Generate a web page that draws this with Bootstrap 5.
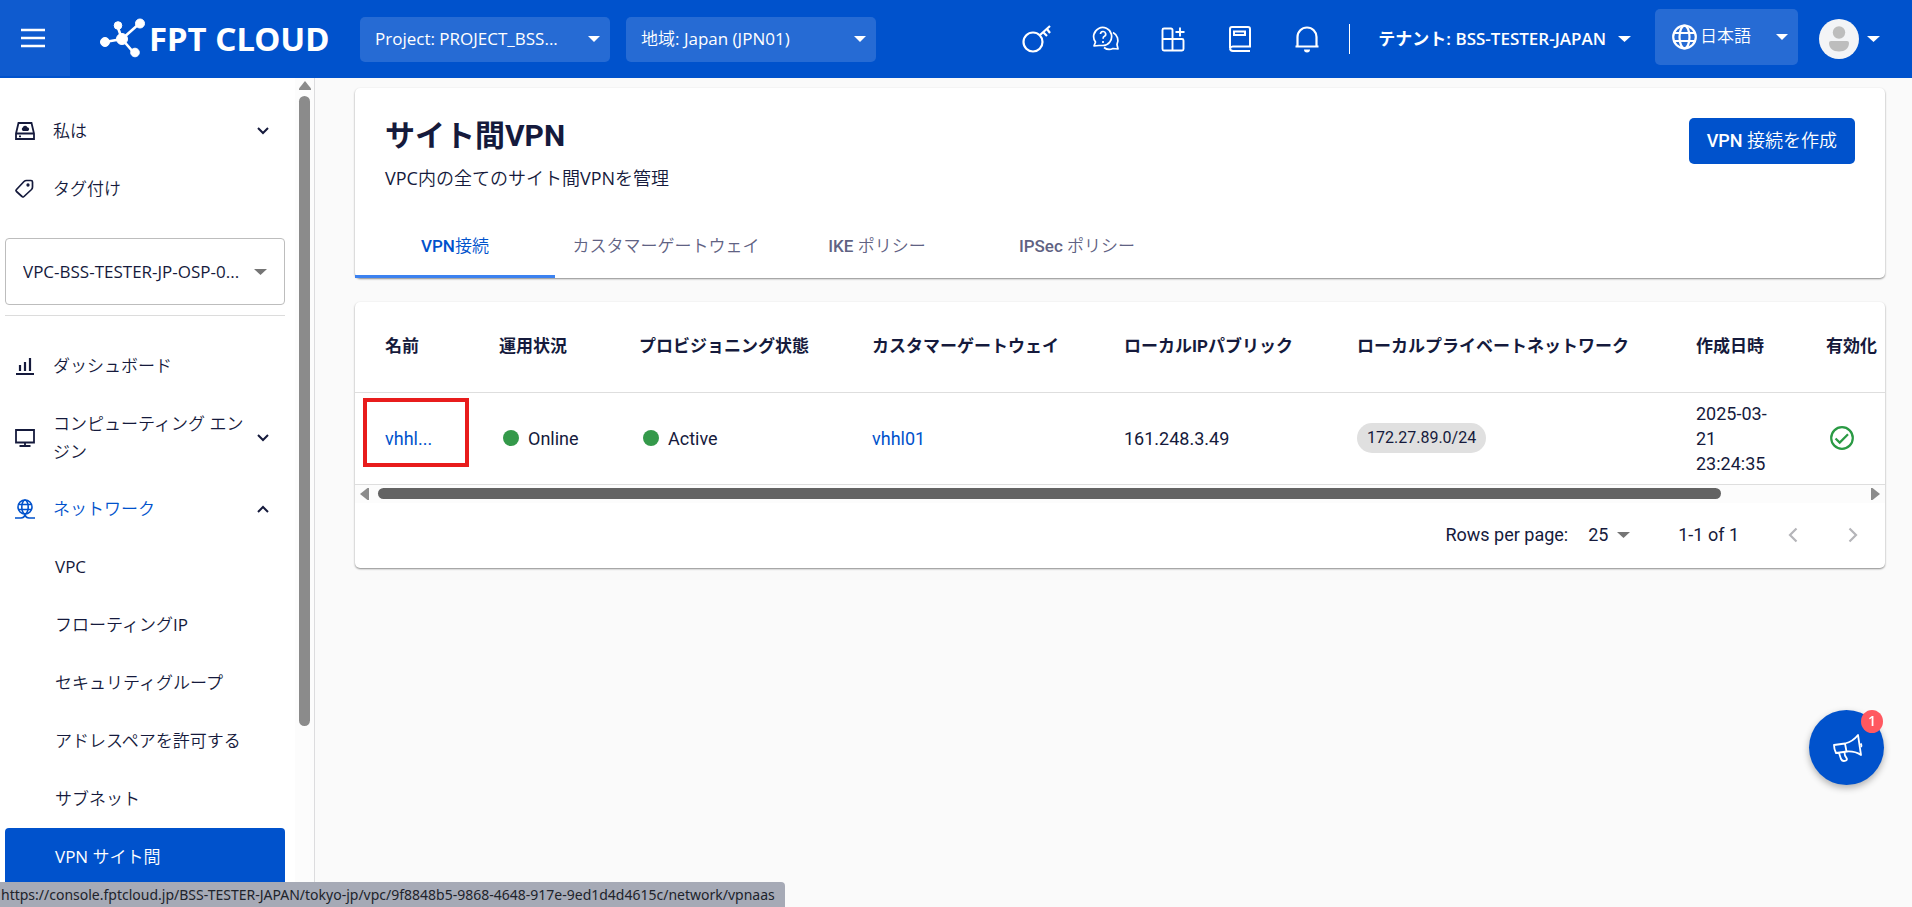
<!DOCTYPE html>
<html lang="ja">
<head>
<meta charset="utf-8">
<meta name="viewport" content="width=device-width, initial-scale=1">
<title>サイト間VPN - FPT Cloud</title>
<link href="https://cdn.jsdelivr.net/npm/bootstrap@5.3.0/dist/css/bootstrap.min.css" rel="stylesheet">
<style>
:root{--brand:#0052cc;--ink:#151a3c;--ui:"Open Sans","Noto Sans CJK JP DemiLight","Noto Sans CJK JP Light","Noto Sans CJK JP",sans-serif;--data:Roboto,"Noto Sans CJK JP",sans-serif;--data-light:Roboto,"Noto Sans CJK JP DemiLight","Noto Sans CJK JP Light","Noto Sans CJK JP",sans-serif}
body{font-family:var(--ui);font-size:17px;line-height:28px;color:var(--ink);background:#fafafa;min-height:100vh}
svg{display:block;flex:none}
a{color:inherit;text-decoration:none}
.icon-btn{border:0;background:none;padding:0;color:inherit;display:flex;align-items:center;justify-content:center}
select{appearance:none;border:0;background:no-repeat right 10px center url("data:image/svg+xml,%3Csvg xmlns='http://www.w3.org/2000/svg' width='12' height='6'%3E%3Cpath d='M0 0h12L6 6z' fill='white'/%3E%3C/svg%3E");color:inherit;text-overflow:ellipsis;font-family:inherit}
/* top bar */
.topbar{height:78px;background:var(--brand);color:#fff}
.menu-btn{width:70px;height:76px;padding-right:4px;background:#0f5bcf}
.brand-link{width:290px;padding-left:29px}
.brand-text{font:700 33px/40px "Noto Sans",sans-serif}
.bar-select{width:250px;height:45px;border-radius:5px;background-color:#266bd4;padding:0 32px 0 15px}
.tool-btn{width:67px;height:48px}
.bar-rule{width:1px;height:30px;background:#fff;margin:0 28px 0 9px}
.tenant{font-family:"Open Sans","Noto Sans CJK JP",sans-serif;font-weight:600;gap:12px}
.lang-box{width:143px;height:56px;border-radius:5px;background:#266bd4;padding-left:17px;margin:0 21px 4px 24px}
.lang-box select{height:100%;padding:0 26px 2px 3px}
/* sidebar */
.side{width:315px;border-right:1px solid #dcdcde;background:#fff;height:calc(100vh - 78px);overflow:hidden}
.side-nav{width:290px;padding:24px 5px 0}
.side-item{height:58px;padding:0 16px 0 10px}
.side-item>svg:first-child{margin-right:18px}
.side-item.tall{height:85px}
.side-sub{height:58px;padding-left:50px;border-radius:4px}
.side-sub.current{background:var(--brand);color:#fff}
.vpc-select{width:100%;height:67px;border:1px solid #bdbdbd;border-radius:4px;padding:0 36px 0 17px;margin-top:20px;background-color:#fff;background-position:right 17px center;background-image:url("data:image/svg+xml,%3Csvg xmlns='http://www.w3.org/2000/svg' width='13' height='6'%3E%3Cpath d='M0 0h13L6.500 6z' fill='%23757575'/%3E%3C/svg%3E")}
.side-rule{margin:10px 0 21px;height:1px;background:#dcdcdc}
.side-track{width:19px;padding-top:3px;background:#fcfcfc;margin-left:auto}
.side-thumb{width:11px;height:calc(100% - 196px);margin-top:6px;border-radius:6px;background:#8b8b8b}
/* content */
.content-area{padding:10px 27px 0 40px}
.panel{background:#fff;border-radius:5px;box-shadow:0 1px 2px rgba(0,0,0,.45)}
h1{font:700 30px/36px var(--data);margin:0 0 10px}
.lead-line{font-size:18px;margin:0}
.panel-head{padding:30px 30px 0 30px;height:130px}
.create-btn{background:var(--brand);color:#fff;height:46px;border:0;border-radius:5px;padding:0 18px;font:500 18px/28px var(--data-light)}
.vpn-tabs{font-family:var(--data-light);font-weight:500;color:#5f6283}
.vpn-tabs a{width:200px;height:60px;padding-top:14px;text-align:center}
.vpn-tabs a.wide{width:222px;font-weight:400}
.vpn-tabs a.on{color:var(--brand);border-bottom:3px solid #3c82f0}
.list-panel{margin-top:24px;font-family:var(--data);font-size:18px}
.vpn-table{width:1706px;table-layout:fixed;margin:0;line-height:25px}
.vpn-table th,.vpn-table td{padding:8px 30px;border-bottom:1px solid #dedede;vertical-align:middle;white-space:nowrap}
.vpn-table th{height:90px;font-weight:700;font-size:17px}
.vpn-table td{height:91px}
.linkish{color:var(--brand)}
.dot{width:16px;height:16px;border-radius:50%;background:#34994a;flex:none}
.status-cell{gap:9px}
.mark-box{position:absolute;left:8px;top:5px;width:106px;height:69px;border:4px solid #e81c1c}
.cidr{display:inline-block;background:#e0e0e0;border-radius:15px;height:30px;line-height:29px;padding:0 10px;font-size:16px}
.h-track{height:18px;padding:0 5px;background:#fcfcfc}
.h-thumb{height:11px;width:calc(100% - 177px);margin-left:9px;border-radius:6px;background:#636363}
.pager{height:65px;padding-right:2px}
.pager select{width:42px;padding:0;margin:0 48px 0 20px;background-position:right center;background-image:url("data:image/svg+xml,%3Csvg xmlns='http://www.w3.org/2000/svg' width='13' height='6'%3E%3Cpath d='M0 0h13L6.500 6z' fill='%23757575'/%3E%3C/svg%3E")}
.page-btn{width:60px;height:40px;color:#b5b5b9}
.news-btn{position:fixed;right:28px;bottom:122px;width:75px;height:75px;border-radius:50%;background:var(--brand);color:#fff;box-shadow:0 3px 7px rgba(0,0,0,.3)}
.news-count{position:absolute;right:1px;top:0;width:22px;height:23px;border-radius:50%;background:#ff5860;font:600 14px/22px var(--ui)}
.url-hint{position:fixed;left:0;bottom:0;height:25px;padding:0 10px 0 1px;background:#a6aab6;border-radius:0 4px 0 0;color:#20232b;font:14px/26px "Noto Sans",sans-serif;white-space:nowrap}
</style>
</head>
<body>
<header class="topbar d-flex align-items-center">
  <button class="icon-btn menu-btn mb-auto" aria-label="メニュー"><svg width="24" height="20" viewBox="0 0 24 20" stroke="#fff" stroke-width="2.600"><path d="M0 2h24M0 10h24M0 18h24"/></svg></button>
  <a href="#" class="brand-link d-flex align-items-center">
    <svg width="50" height="44" viewBox="0 0 50 44" fill="#fff" stroke="#fff"><path fill="none" stroke-width="2.600" d="M6 25l17-3 18-16M18 8l5 14 12 14"/><circle cx="6" cy="25" r="4.500"/><circle cx="19" cy="8.500" r="3.800"/><circle cx="23" cy="22" r="5.500"/><circle cx="41" cy="6.500" r="4.500"/><circle cx="36" cy="35.500" r="4.300"/></svg>
    <span class="brand-text text-nowrap">FPT CLOUD</span>
  </a>
  <select class="bar-select ms-0" aria-label="Project"><option>Project: PROJECT_BSS...</option></select>
  <select class="bar-select ms-3" aria-label="地域"><option>地域: Japan (JPN01)</option></select>
  <div class="d-flex align-items-center ms-auto">
    <button class="icon-btn tool-btn" aria-label="キー"><svg width="36" height="32" viewBox="0 0 36 32" fill="none" stroke="#fff" stroke-width="2.200"><circle cx="12" cy="19" r="9.500"/><path d="M19 12L29 3M22 9l4 4M26 6l3 4"/></svg></button>
    <button class="icon-btn tool-btn" aria-label="サポート"><svg width="28" height="28" viewBox="0 0 28 28" fill="none" stroke="#fff" stroke-width="1.700" stroke-linejoin="round"><path d="M2 21l1.500-4A9 9 0 1 1 11 20.500H7z"/><path d="M8.500 9a2.600 2.600 0 1 1 3.600 2.500c-1 .5-1 1-1 2.200M11 16v2M21 7.500a9 9 0 0 1 4 12l1 4.500-5-.5c-3 1.500-6.500 1-9-1"/></svg></button>
    <button class="icon-btn tool-btn" aria-label="サービス"><svg width="26" height="28" viewBox="0 0 26 28" fill="none" stroke="#fff" stroke-width="1.900"><path d="M12.500 14V5A1.500 1.500 0 0 0 11 3.500H4A1.500 1.500 0 0 0 2.500 5v19A1.500 1.500 0 0 0 4 25.500h18a1.500 1.500 0 0 0 1.500-1.500v-8.500a1.500 1.500 0 0 0-1.500-1.500H2.500M12.500 14v11.500M20 2.500v9M15.500 7h9"/></svg></button>
    <button class="icon-btn tool-btn" aria-label="ドキュメント"><svg width="24" height="28" viewBox="0 0 24 28" fill="none" stroke="#fff" stroke-width="2"><path d="M22 21.500H5a3 3 0 0 0-3 2V4a2 2 0 0 1 2-2h16a2 2 0 0 1 2 2zM2 23a3 3 0 0 0 3 3h17M6 6.500h11v3.500H6z"/></svg></button>
    <button class="icon-btn tool-btn" aria-label="通知"><svg width="26" height="28" viewBox="0 0 26 28" fill="none" stroke="#fff" stroke-width="2.200"><path d="M3.500 21.500V12a9.500 9.500 0 0 1 19 0v9.500M1.500 21.500h23"/><path fill="#fff" stroke="none" d="M10 24.500h6a3 3 0 0 1-6 0z"/></svg></button>
    <span class="bar-rule"></span>
    <a href="#" class="tenant d-flex align-items-center text-nowrap">テナント: BSS-TESTER-JAPAN<svg width="13" height="6" viewBox="0 0 13 6" fill="#fff"><path d="M0 0h13L6.500 6z"/></svg></a>
    <div class="lang-box d-flex align-items-center">
      <svg width="25" height="26" viewBox="0 0 25 26" fill="none" stroke="#fff" stroke-width="2.200"><circle cx="12.500" cy="13" r="11.300"/><ellipse cx="12.500" cy="13" rx="5" ry="11.300"/><path d="M2.500 9h20M2.500 17h20"/></svg>
      <select class="flex-grow-1" aria-label="言語"><option>日本語</option></select>
    </div>
    <a href="#" class="d-flex align-items-center me-4 pe-2" aria-label="アカウント"><svg width="40" height="40" viewBox="0 0 40 40" fill="#bdbdbd"><circle cx="20" cy="20" r="20" fill="#f3f4f6"/><circle cx="20" cy="13.500" r="6.200"/><path d="M12 22h16q2 0 2 2c0 5-4 8.500-10 8.500S10 29 10 24q0-2 2-2z"/></svg><svg class="ms-2" width="13" height="6" viewBox="0 0 13 6" fill="#fff"><path d="M0 0h13L6.500 6z"/></svg></a>
  </div>
</header>

<div class="d-flex">
  <aside class="side d-flex flex-shrink-0">
    <nav class="side-nav flex-shrink-0">
      <a href="#" class="side-item d-flex align-items-center"><svg width="20" height="18" viewBox="0 0 20 18" fill="none" stroke="currentColor" stroke-width="1.800"><path d="M1 11.500L3.500 1h13L19 11.500V17H1zM1 11.500h18M4 14.300h2"/><path fill="currentColor" stroke="none" d="M8 9a2 2 0 0 1-.3-3.500 2.500 2.500 0 0 1 4.600-.3A2 2 0 0 1 13 9z"/></svg><span class="flex-grow-1">私は</span><svg width="12" height="8" viewBox="0 0 12 8" fill="none" stroke="currentColor" stroke-width="2"><path d="M1 1l5 5 5-5"/></svg></a>
      <a href="#" class="side-item d-flex align-items-center"><svg width="20" height="20" viewBox="0 0 20 20" fill="none" stroke="currentColor" stroke-width="1.700" stroke-linejoin="round"><path d="M1.500 10.500L9 2.500Q10 1.500 11.500 1.500H16q1.500 0 1.500 1.500v5q0 1.500-1 2.500l-7.500 7q-1 1-2 0l-5.500-5q-1-1 0-2z"/><circle cx="13" cy="6" r=".8" fill="currentColor"/></svg>タグ付け</a>
      <select class="vpc-select" aria-label="VPC"><option>VPC-BSS-TESTER-JP-OSP-0...</option></select>
      <div class="side-rule"></div>
      <a href="#" class="side-item d-flex align-items-center"><svg width="20" height="18" viewBox="0 0 20 18" stroke="currentColor" stroke-width="2.200"><path d="M1 17h18M5 14V8M10 14V5M15 14V1"/></svg>ダッシュボード</a>
      <a href="#" class="side-item tall d-flex align-items-center"><svg width="20" height="18" viewBox="0 0 20 18" fill="none" stroke="currentColor" stroke-width="1.800"><path d="M1 1h18v12.500H1zM10 13.500V17M4.500 17h11"/></svg><span class="flex-grow-1">コンピューティング エンジン</span><svg width="12" height="8" viewBox="0 0 12 8" fill="none" stroke="currentColor" stroke-width="2"><path d="M1 1l5 5 5-5"/></svg></a>
      <a href="#" class="side-item d-flex align-items-center"><svg width="20" height="20" viewBox="0 0 20 20" fill="none" stroke="#0052cc" stroke-width="1.600"><circle cx="10" cy="8" r="7"/><ellipse cx="10" cy="8" rx="3.200" ry="7"/><path d="M3.500 5.500h13M3.500 10.500h13M0 19h6q3 0 4-3 1 3 4 3h6"/></svg><span class="flex-grow-1 linkish">ネットワーク</span><svg width="12" height="8" viewBox="0 0 12 8" fill="none" stroke="currentColor" stroke-width="2"><path d="M1 7l5-5 5 5"/></svg></a>
      <a href="#" class="side-sub d-flex align-items-center">VPC</a>
      <a href="#" class="side-sub d-flex align-items-center">フローティングIP</a>
      <a href="#" class="side-sub d-flex align-items-center">セキュリティグループ</a>
      <a href="#" class="side-sub d-flex align-items-center">アドレスペアを許可する</a>
      <a href="#" class="side-sub d-flex align-items-center">サブネット</a>
      <a href="#" class="side-sub current d-flex align-items-center">VPN サイト間</a>
    </nav>
    <div class="side-track d-flex flex-column align-items-center">
      <svg width="12" height="9" viewBox="0 0 12 9" fill="#8b8b8b"><path d="M6 0l6 7.500V9H0V7.500z"/></svg>
      <div class="side-thumb"></div>
    </div>
  </aside>

  <main class="content-area flex-grow-1 overflow-hidden">
    <section class="panel">
      <div class="panel-head d-flex justify-content-between align-items-start">
        <div>
          <h1>サイト間VPN</h1>
          <p class="lead-line">VPC内の全てのサイト間VPNを管理</p>
        </div>
        <button class="create-btn">VPN 接続を作成</button>
      </div>
      <nav class="vpn-tabs d-flex">
        <a href="#" class="on">VPN接続</a>
        <a href="#" class="wide">カスタマーゲートウェイ</a>
        <a href="#">IKE ポリシー</a>
        <a href="#">IPSec ポリシー</a>
      </nav>
    </section>

    <section class="panel list-panel">
      <div class="overflow-hidden">
        <table class="vpn-table">
          <colgroup><col style="width:114px"><col style="width:140px"><col style="width:233px"><col style="width:252px"><col style="width:233px"><col style="width:339px"><col style="width:130px"><col style="width:113px"><col></colgroup>
          <thead><tr><th>名前</th><th>運用状況</th><th>プロビジョニング状態</th><th>カスタマーゲートウェイ</th><th>ローカルIPパブリック</th><th>ローカルプライベートネットワーク</th><th>作成日時</th><th>有効化</th><th></th></tr></thead>
          <tbody><tr>
            <td class="position-relative"><a href="#" class="linkish">vhhl...</a><span class="mark-box"></span></td>
            <td><div class="status-cell d-flex align-items-center ms-1"><span class="dot"></span>Online</div></td>
            <td><div class="status-cell d-flex align-items-center ms-1"><span class="dot"></span>Active</div></td>
            <td><a href="#" class="linkish">vhhl01</a></td>
            <td>161.248.3.49</td>
            <td><span class="cidr">172.27.89.0/24</span></td>
            <td>2025-03-<br>21<br>23:24:35</td>
            <td><svg class="ms-1" width="24" height="24" viewBox="0 0 26 26" fill="none" stroke="#2a9a44" stroke-width="2.400"><circle cx="13" cy="13" r="11.700"/><path d="M6 13.500l4.500 4.500L19.500 9"/></svg></td>
            <td></td>
          </tr></tbody>
        </table>
      </div>
      <div class="h-track d-flex align-items-center">
        <svg width="9" height="12" viewBox="0 0 9 12" fill="#8b8b8b"><path d="M0 6l7.500-6H9v12H7.500z"/></svg>
        <div class="h-thumb"></div>
        <svg class="ms-auto" width="9" height="12" viewBox="0 0 9 12" fill="#8b8b8b"><path d="M9 6L1.500 0H0v12h1.500z"/></svg>
      </div>
      <div class="pager d-flex align-items-center justify-content-end">
        <label for="rows">Rows per page:</label>
        <select id="rows"><option>25</option></select>
        <span class="me-4">1-1 of 1</span>
        <button class="icon-btn page-btn" aria-label="前のページ"><svg width="10" height="16" viewBox="0 0 10 16" fill="none" stroke="currentColor" stroke-width="2.200"><path d="M8.500 1.500L2 8l6.500 6.500"/></svg></button>
        <button class="icon-btn page-btn" aria-label="次のページ"><svg width="10" height="16" viewBox="0 0 10 16" fill="none" stroke="currentColor" stroke-width="2.200"><path d="M1.500 1.500L8 8l-6.500 6.500"/></svg></button>
      </div>
    </section>
  </main>
</div>

<button class="icon-btn news-btn" aria-label="お知らせ"><svg width="32" height="32" viewBox="0 0 32 32" fill="none" stroke="#fff" stroke-width="1.800" stroke-linejoin="round"><path d="M3 13l11-1.500q8-2 13-8.500l3 20q-6-4-14-3.500L5 21q-2-4-2-8zM14 11.500l1.500 8M8 21l2 6q1.500 3 5 1.500 1.500-1 .5-2.500-2-2-2-5.500"/><path d="M29.500 11.500q1.500 1.500.5 3.500"/></svg><span class="news-count">1</span></button>
<div class="url-hint">https://console.fptcloud.jp/BSS-TESTER-JAPAN/tokyo-jp/vpc/9f8848b5-9868-4648-917e-9ed1d4d4615c/network/vpnaas</div>
<script src="https://cdn.jsdelivr.net/npm/bootstrap@5.3.0/dist/js/bootstrap.bundle.min.js"></script>
</body>
</html>
